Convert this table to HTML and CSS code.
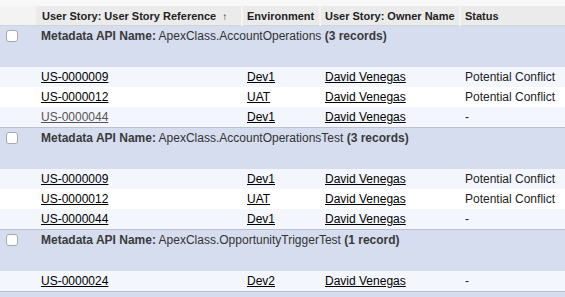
FILE: index.html
```html
<!DOCTYPE html>
<html>
<head>
<meta charset="utf-8">
<link rel="stylesheet" href="styles.css">
</head>
<body>
<div class="top-strip"></div>
<table class="grid">
  <colgroup>
    <col class="c0"><col class="c1"><col class="c2"><col class="c3"><col class="c4">
  </colgroup>
  <thead>
    <tr class="head">
      <th class="blank"></th>
      <th>User Story: User Story Reference <span class="arrow">↑</span></th>
      <th class="div">Environment</th>
      <th class="div">User Story: Owner Name</th>
      <th class="div">Status</th>
    </tr>
  </thead>
  <tbody>
    <tr class="group">
      <td><span class="cb"></span></td>
      <td colspan="4"><b>Metadata API Name:</b> ApexClass.AccountOperations <b>(3 records)</b></td>
    </tr>
    <tr class="row odd"><td></td><td><a>US-0000009</a></td><td><a>Dev1</a></td><td><a>David Venegas</a></td><td>Potential Conflict</td></tr>
    <tr class="row"><td></td><td><a>US-0000012</a></td><td><a>UAT</a></td><td><a>David Venegas</a></td><td>Potential Conflict</td></tr>
    <tr class="row odd last"><td></td><td><a class="visited">US-0000044</a></td><td><a>Dev1</a></td><td><a>David Venegas</a></td><td>-</td></tr>

    <tr class="group">
      <td><span class="cb"></span></td>
      <td colspan="4"><b>Metadata API Name:</b> ApexClass.AccountOperationsTest <b>(3 records)</b></td>
    </tr>
    <tr class="row odd"><td></td><td><a>US-0000009</a></td><td><a>Dev1</a></td><td><a>David Venegas</a></td><td>Potential Conflict</td></tr>
    <tr class="row"><td></td><td><a>US-0000012</a></td><td><a>UAT</a></td><td><a>David Venegas</a></td><td>Potential Conflict</td></tr>
    <tr class="row odd last"><td></td><td><a>US-0000044</a></td><td><a>Dev1</a></td><td><a>David Venegas</a></td><td>-</td></tr>

    <tr class="group">
      <td><span class="cb"></span></td>
      <td colspan="4"><b>Metadata API Name:</b> ApexClass.OpportunityTriggerTest <b>(1 record)</b></td>
    </tr>
    <tr class="row odd last"><td></td><td><a>US-0000024</a></td><td><a>Dev2</a></td><td><a>David Venegas</a></td><td>-</td></tr>
  </tbody>
</table>
</body>
</html>
```
FILE: styles.css
```css
html, body {
  margin: 0;
  padding: 0;
  background: #d5ddef;
}
body {
  font-family: "Liberation Sans", Arial, sans-serif;
  font-size: 12px;
  color: #222;
  overflow: hidden;
}
.top-strip {
  height: 6px;
  background: #f8f8f8;
}
.grid {
  border-collapse: collapse;
  width: 565px;
  table-layout: fixed;
}
.c0 { width: 36px; }
.c1 { width: 206px; }
.c2 { width: 78px; }
.c3 { width: 140px; }
.c4 { width: 105px; }

.head th {
  height: 19px;
  padding: 0 0 0 6px;
  background: #ebebeb;
  text-align: left;
  font-size: 11px;
  font-weight: bold;
  color: #222;
  white-space: nowrap;
  border-bottom: 1px solid #d4d4d4;
  vertical-align: middle;
}
.head th.blank {
  background: #f3f3f3;
  padding: 0;
}
.head th.div {
  border-left: 2px solid #f4f4f4;
  padding-left: 4px;
}
.arrow {
  font-weight: normal;
  font-size: 10px;
  margin-left: 3px;
}
.group td {
  height: 41px;
  padding: 0;
  vertical-align: top;
  background: #d5ddef;
  color: #333;
  white-space: nowrap;
}
.group td:nth-child(2) {
  padding-left: 5px;
  padding-top: 3px;
  height: 38px;
}
.group b { color: #3a3a3a; }
.cb {
  display: block;
  width: 10px;
  height: 10px;
  margin: 4px 0 0 6px;
  background: #fff;
  border: 1px solid #a8a8a8;
  border-radius: 3px;
}
.row td {
  height: 20px;
  padding: 0 0 0 5px;
  background: #fff;
  white-space: nowrap;
  vertical-align: middle;
}
.row td:first-child { padding: 0; }
.row.odd td { background: #f3f6fd; }
.row.last td { border-bottom: 1px solid #b9c1d1; }
.row a {
  color: #000;
  text-decoration: underline;
}
.row a.visited { color: #555; }
```
